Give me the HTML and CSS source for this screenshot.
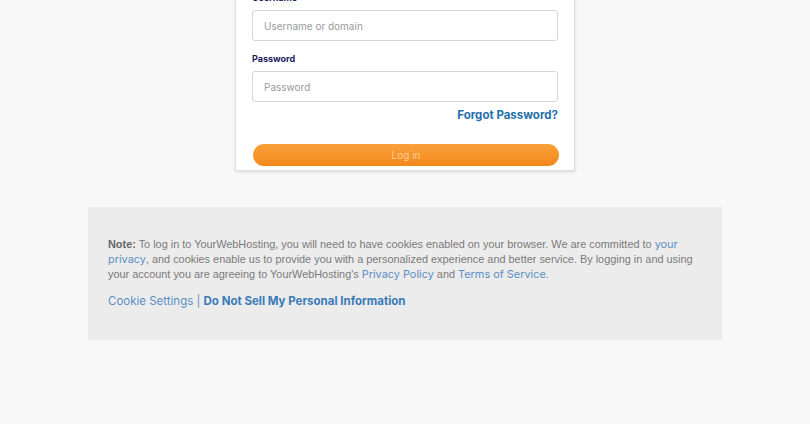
FILE: index.html
```html
<!DOCTYPE html>
<html lang="en">
<head>
    <meta charset="UTF-8">
    <meta name="viewport" content="width=device-width, initial-scale=1.0">
    <title>Log in</title>
    <link rel="stylesheet" href="styles.css">
</head>
<body>

    <div class="login-card">
        <label class="field-label" for="username">Username</label>
        <input class="field-input" id="username" type="text" placeholder="Username or domain">

        <label class="field-label" for="password">Password</label>
        <input class="field-input" id="password" type="password" placeholder="Password">

        <div class="forgot-row">
            <a href="#" class="forgot-link">Forgot Password?</a>
        </div>

        <button class="login-btn" type="button">Log in</button>
    </div>

    <div class="note-box">
        <p class="note-text">
            <b>Note:</b> To log in to YourWebHosting, you will need to have cookies enabled on your browser. We are committed to <a href="#">your privacy</a>, and cookies enable us to provide you with a personalized experience and better service. By logging in and using your account you are agreeing to YourWebHosting's <a href="#">Privacy Policy</a> and <a href="#">Terms of Service</a>.
        </p>
        <p class="note-links">
            <a href="#">Cookie Settings</a> | <a href="#" class="strong-link">Do Not Sell My Personal Information</a>
        </p>
    </div>

</body>
</html>
```

FILE: styles.css
```css
body {
    margin: 0;
    padding: 0;
    background-color: #f8f8f8;
    font-family: Inter, "Open Sans", sans-serif;
}

.login-card {
    width: 306px;
    margin: -21px auto 0;
    padding: 12px 16px 4px;
    background-color: #ffffff;
    border: 1px solid #dedede;
    box-shadow: 0 1px 3px rgba(0, 0, 0, 0.12);
}

.field-label {
    display: block;
    font-size: 9px;
    line-height: 12px;
    font-weight: 700;
    color: #1c1a5c;
    margin-bottom: 6px;
}

.field-input {
    display: block;
    box-sizing: border-box;
    width: 100%;
    height: 31px;
    padding: 0 11px;
    border: 1px solid #d3d6da;
    border-radius: 3px;
    font-family: inherit;
    font-size: 10px;
    color: #333;
    margin-bottom: 12px;
}

.field-input::placeholder {
    color: #9a9a9a;
}

.forgot-row {
    text-align: right;
    margin-top: -7px;
    font-size: 11.5px;
    line-height: 16px;
}

.forgot-link {
    font-weight: 700;
    color: #1f6fa9;
    text-decoration: none;
}

.login-btn {
    display: block;
    width: 100%;
    height: 22px;
    margin-top: 21px;
    margin-left: 1px;
    border: none;
    border-radius: 11px;
    background: linear-gradient(#f9a23a, #f2871c);
    color: #fbd29c;
    font-family: inherit;
    font-size: 10px;
}

.note-box {
    width: 594px;
    margin: 36px auto 0;
    padding: 30px 20px 31px;
    background-color: #ececec;
}

.note-text {
    margin: 0;
    font-family: "Liberation Sans", Arial, sans-serif;
    font-size: 10.9px;
    line-height: 15px;
    color: #7a7a7a;
}

.note-text b {
    color: #666;
}

.note-text a {
    font-family: Inter, "Open Sans", sans-serif;
    line-height: 15px;
    color: #5b8fc4;
    text-decoration: none;
}

.note-links {
    margin: 11px 0 0;
    font-size: 11.5px;
    line-height: 16px;
    color: #5b8fc4;
}

.note-links a {
    color: #5b8fc4;
    text-decoration: none;
}

.note-links .strong-link {
    font-weight: 700;
    color: #3a7ab8;
}
```
